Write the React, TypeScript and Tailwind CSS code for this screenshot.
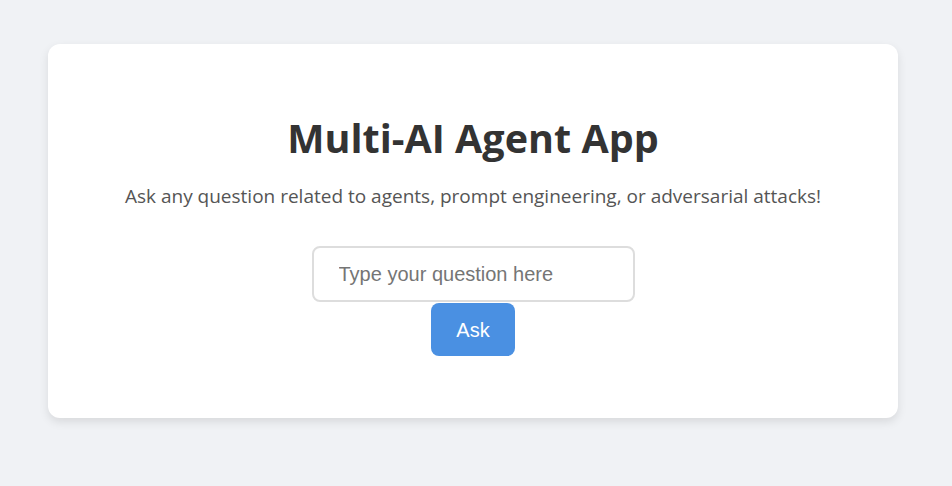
import { useState } from 'react';

export default function App() {
  const [question, setQuestion] = useState('');

  return (
    <main className="min-h-screen w-full bg-[#f0f2f5] px-12 pt-[44px]">
      <section className="flex w-[850px] flex-col items-center rounded-xl bg-white pt-[66px] pb-[62px] shadow-[0_4px_10px_rgba(0,0,0,0.1)]">
        {/* 헤더 */}
        <h1 className="font-['Open_Sans',sans-serif] text-[39.5px] font-bold leading-[56px] text-[#333]">
          Multi-AI Agent App
        </h1>
        <p className="mt-[16px] font-['Open_Sans',sans-serif] text-[19px] leading-[28px] text-[#555]">
          Ask any question related to agents, prompt engineering, or adversarial attacks!
        </p>

        {/* 입력 영역 */}
        <div className="mt-[36px] flex flex-col items-center">
          <input
            value={question}
            onChange={(e) => setQuestion(e.target.value)}
            placeholder="Type your question here"
            className="h-[56px] w-[323px] rounded-lg border-2 border-[#ddd] px-[25px] font-['Liberation_Sans',Arial,sans-serif] text-[20px] text-[#333] outline-none placeholder:text-[#757575]"
          />
          <button
            type="button"
            className="mt-px h-[53px] w-[84px] rounded-lg bg-[#4a90e2] font-['Liberation_Sans',Arial,sans-serif] text-[20px] text-white"
          >
            Ask
          </button>
        </div>
      </section>
    </main>
  );
}
